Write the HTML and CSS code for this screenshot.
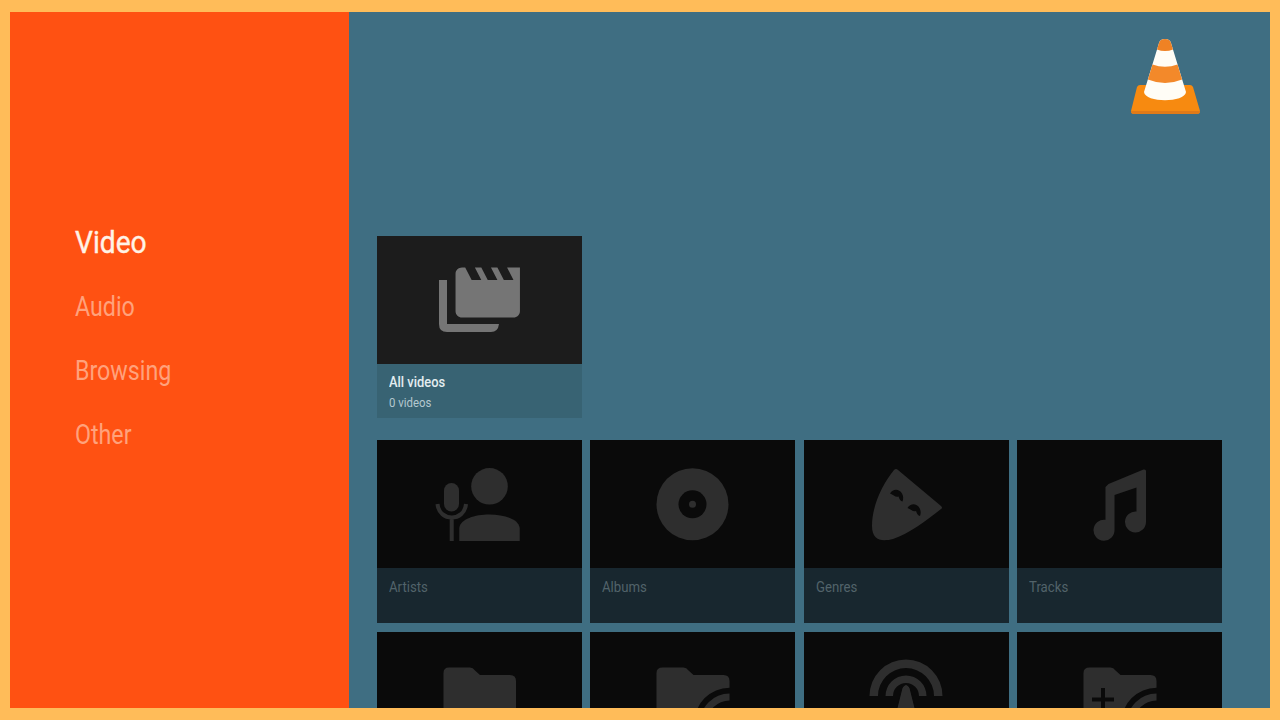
FILE: index.html
```html
<!DOCTYPE html>
<html lang="en">
<head>
    <meta charset="UTF-8">
    <meta name="viewport" content="width=device-width, initial-scale=1.0">
    <title>VLC</title>
    <link rel="stylesheet" href="styles.css">
</head>
<body>
    <div class="screen">
        <nav class="sidebar">
            <a class="nav-item active"><span>Video</span></a>
            <a class="nav-item"><span>Audio</span></a>
            <a class="nav-item"><span>Browsing</span></a>
            <a class="nav-item"><span>Other</span></a>
        </nav>
        <main class="content">
            <header class="header">
                <svg class="logo" width="72" height="78" viewBox="0 0 72 78">
                    <path d="M10 47h50q2 0 3 2l7 24q0 3-3 3H4q-3 0-3-3l6-24q1-2 3-2z" fill="#f78a10"/>
                    <path d="M1 73q0 3 3 3h63q3 0 3-3z" fill="#e07a18"/>
                    <path d="M29 5q1-4 6-4t6 4l15 49c-1 11-41 11-42 0z" fill="#fffdf6"/>
                    <path d="M29 5q1-4 6-4t6 4l2 6.500q-8 3-16 0z" fill="#ef8224"/>
                    <path d="M22.500 26.500q12.500 4.500 25 0l4.600 15q-17 7-34.200 0z" fill="#f3892a"/>
                </svg>
            </header>

            <div class="row">
                <div class="card selected">
                    <svg class="thumb" viewBox="0 0 205 128">
                        <path transform="translate(72.100 18.900) scale(3.220 3.130)" d="M18 4l2 4h-3l-2-4h-2l2 4h-3l-2-4H8l2 4H7L5 4H4c-1.100 0-2 .9-2 2v12c0 1.100.9 2 2 2h16c1.100 0 2-.9 2-2V4h-4z"/>
                        <path d="M62 44h8v44h52q-1 8-8 8H70q-8 0-8-8z"/>
                    </svg>
                    <div class="info">
                        <div class="title"><span>All videos</span></div>
                        <div class="subtitle"><span>0 videos</span></div>
                    </div>
                </div>
            </div>

            <div class="row">
                <div class="card">
                    <svg class="thumb" viewBox="0 0 205 128">
                        <rect x="67" y="43" width="15" height="28.500" rx="7.500"/>
                        <path d="M60.500 64c1.500 18 27 18 28.500 0M74.700 77v24" class="line"/>
                        <circle cx="112.500" cy="46.300" r="18.300"/>
                        <path d="M82.300 101V88c2-18 58-18 60.400 0v13z"/>
                    </svg>
                    <div class="info"><div class="title"><span>Artists</span></div></div>
                </div>
                <div class="card">
                    <svg class="thumb" viewBox="0 0 205 128">
                        <circle cx="102.500" cy="64.300" r="36"/>
                        <circle cx="102.500" cy="64.300" r="14" class="cut"/>
                        <circle cx="102.500" cy="64.300" r="3.500"/>
                    </svg>
                    <div class="info"><div class="title"><span>Albums</span></div></div>
                </div>
                <div class="card">
                    <svg class="thumb" viewBox="0 0 205 128">
                        <path d="M90 30q2-2 4 0l43 36q2 2 0 3c-15 12-33 25-48 30-12 3-21 1-21-13 0-20 10-41 22-56z"/>
                        <path id="eye" d="M86 53.500c3-5 9-5 12 0 1.500 3 1.500 5 .5 8-2-.5-3-2-4-5-3 1-5-1.500-8.500-3z" class="cut"/>
                        <use href="#eye" x="17.500" y="14.500"/>
                    </svg>
                    <div class="info"><div class="title"><span>Genres</span></div></div>
                </div>
                <div class="card">
                    <svg class="thumb" viewBox="0 0 205 128">
                        <path d="M88.500 47l3-3 35-14.500q2.500-.5 2.500 1.500v51a10.500 10.500 0 1 1-9.500-10.500V47.500l-22 7.500v35a10.500 10.500 0 1 1-9-10.200z"/>
                    </svg>
                    <div class="info"><div class="title"><span>Tracks</span></div></div>
                </div>
            </div>

            <div class="row">
                <div class="card">
                    <svg class="thumb" viewBox="0 0 205 128">
                        <path d="M72 35.500h21q3 0 5 3l5 4.500h30q6 0 6 6v46H66.500V41q0-5.500 5.500-5.500z"/>
                    </svg>
                    <div class="info"></div>
                </div>
                <div class="card">
                    <svg class="thumb" viewBox="0 0 205 128">
                        <path d="M72.500 35.500h21q3 0 5 3l5 4.500h30q6 0 6 6v6.800a35 35 0 0 0-35 35.200v4H66.500V41q0-5.500 6-5.500zM139.500 61.500v7a22.500 22.500 0 0 0-22.500 22.500h-7a29.500 29.500 0 0 1 29.500-29.500z"/>
                    </svg>
                    <div class="info"></div>
                </div>
                <div class="card">
                    <svg class="thumb" viewBox="0 0 205 128">
                        <path d="M65.500 64a36.500 36.500 0 0 1 73 0h-8.500a28 28 0 0 0-56 0zM81.500 64a20.500 20.500 0 0 1 41 0h-7.500a13 13 0 0 0-26 0z"/>
                        <path d="M98 56q4-7 8 0l11 44H87z" class="mast"/>
                    </svg>
                    <div class="info"></div>
                </div>
                <div class="card">
                    <svg class="thumb" viewBox="0 0 205 128">
                        <path d="M72.500 35.500h21q3 0 5 3l5 4.500h30q6 0 6 6v6.800a35 35 0 0 0-35 35.200v4H66.500V41q0-5.500 6-5.500zM139.500 61.500v7a22.500 22.500 0 0 0-22.500 22.500h-7a29.500 29.500 0 0 1 29.500-29.500z"/>
                        <path d="M75 67.500h22M86 56v23" class="plus"/>
                    </svg>
                    <div class="info"></div>
                </div>
            </div>
        </main>
    </div>
</body>
</html>
```
FILE: styles.css
```css
* {
    box-sizing: border-box;
}

body {
    margin: 0;
    height: 720px;
    padding: 12px 10px;
    background: #ffbc59;
    font-family: Roboto, "Liberation Sans", sans-serif;
    overflow: hidden;
}

.screen {
    display: flex;
    height: 696px;
    background: #3f6e82;
    overflow: hidden;
}

/* Sidebar */
.sidebar {
    width: 339px;
    flex-shrink: 0;
    padding: 198px 0 0 65px;
    background: #ff5112;
}

.nav-item {
    display: flex;
    align-items: center;
    height: 64px;
    padding-top: 2px;
    font-size: 27px;
    color: #ffa27c;
}

.nav-item.active {
    padding-top: 0;
    font-size: 32px;
    color: #fff3e6;
    -webkit-text-stroke: 0.4px #fff3e6;
}

/* Roboto narrowed to its condensed width */
.nav-item span,
.title span,
.subtitle span {
    display: inline-block;
    transform: scaleX(0.86);
    transform-origin: left center;
}

.nav-item.active span {
    transform: scaleX(0.88);
}

/* Card rows */
.content {
    flex: 1;
    padding-left: 28px;
}

.header {
    display: flex;
    justify-content: flex-end;
    height: 224px;
    padding: 26px 68px 0 0;
}

.row {
    display: flex;
    gap: 8.3px;
    margin-bottom: 9px;
}

.card {
    width: 205px;
    height: 183px;
    background: #18272f;
    color: #52636a;
}

.card.selected {
    height: 182px;
    margin-bottom: 13px;
    background: #386373;
    color: #e3edf0;
}

.thumb {
    display: block;
    width: 205px;
    height: 128px;
    background: #0a0a0a;
    fill: #2e2e2e;
}

.selected .thumb {
    background: #1c1c1c;
    fill: #757575;
}

.thumb .cut {
    fill: #0a0a0a;
}

.thumb .line {
    fill: none;
    stroke: #2e2e2e;
    stroke-width: 4;
}

.thumb .plus {
    stroke: #0a0a0a;
    stroke-width: 4;
}

.thumb .mast {
    stroke: #0a0a0a;
    stroke-width: 1;
}

.info {
    padding: 11px 12px;
}

.title {
    font-size: 14.5px;
    line-height: 18px;
}

.title span {
    transform: scaleX(0.91);
}

.selected .title {
    margin-top: -1px;
    font-weight: 500;
}

.selected .title span {
    transform: scaleX(0.89);
}

.subtitle {
    margin-top: 3px;
    font-size: 12px;
    line-height: 17px;
    color: #b4c8d0;
}

.subtitle span {
    transform: scaleX(0.95);
}
```
